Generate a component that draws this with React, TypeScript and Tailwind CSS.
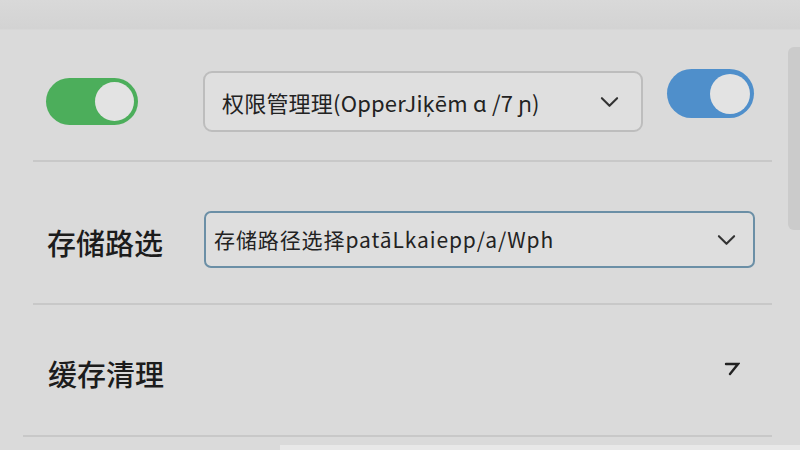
import React from "react";

const font = { fontFamily: '"Noto Sans CJK SC", "Noto Sans", sans-serif' };

function Chevron({ className }: { className: string }) {
  return (
    <svg className={className} viewBox="0 0 20 12" fill="none" stroke="#333" strokeWidth="2.2" strokeLinecap="round" strokeLinejoin="round">
      <path d="M2 2 L10 10 L18 2" />
    </svg>
  );
}

export default function App() {
  return (
    <div className="relative w-[800px] h-[450px] overflow-hidden bg-[#dadada] text-[#1c1c1c]" style={font}>
      <div className="h-[30px] bg-gradient-to-b from-[#d9d9d9] to-[#d3d3d3] border-b border-[#d7d7d7]" />

      {/* Row 1 */}
      <div className="h-[130px] flex items-center pt-[13px]">
        <div className="ml-[46px] w-[92px] h-[47px] rounded-full bg-[#4cae5b] flex items-center justify-end pr-[4px]">
          <div className="w-[39px] h-[39px] rounded-full bg-[#e3e3e3]" />
        </div>
        <div className="ml-[65px] w-[440px] h-[61px] rounded-[9px] border-2 border-[#bdbdbd] bg-[#dfdfdf] flex items-center pl-[17px] pr-[22px]">
          <span className="text-[22px] leading-none tracking-[0.2px] text-[#222]">权限管理理(OpperJiķēm ɑ /7 ɲ)</span>
          <Chevron className="ml-auto w-[19px] h-[12px]" />
        </div>
        <div className="ml-[24px] mb-[16px] w-[87px] h-[49px] rounded-full bg-[#4f8fcb] flex items-center justify-end pr-[4px]">
          <div className="w-[40px] h-[40px] rounded-full bg-[#e3e3e3]" />
        </div>
      </div>
      <div className="ml-[33px] w-[739px] h-[2px] bg-[#c8c8c8]" />

      {/* Row 2 */}
      <div className="h-[141px] flex items-center pt-[14px]">
        <span className="ml-[47px] w-[157px] text-[29px] font-medium leading-none mt-[6px]">存储路选</span>
        <div className="w-[551px] h-[57px] rounded-[7px] border-2 border-[#6b8fa6] bg-[#dedede] flex items-center pl-[8px] pr-[17px]">
          <span className="text-[21px] leading-none tracking-[0.9px] text-[#222]">存储路径选择patāLkaiepp/a/Wph</span>
          <Chevron className="ml-auto w-[19px] h-[12px]" />
        </div>
      </div>
      <div className="ml-[33px] w-[739px] h-[2px] bg-[#c8c8c8]" />

      {/* Row 3 */}
      <div className="h-[130px] flex items-center pt-[6px]">
        <span className="ml-[48px] text-[29px] font-medium leading-none">缓存清理</span>
        <svg className="ml-auto mr-[60px] w-[16px] h-[14px] mb-[8px]" viewBox="0 0 16 14" fill="none" stroke="#222" strokeWidth="2.4" strokeLinecap="round">
          <path d="M2 2 L14 2 L6 12" />
        </svg>
      </div>
      <div className="ml-[23px] w-[749px] h-[2px] bg-[#c8c8c8]" />
      <div className="flex h-[20px]">
        <div className="w-[280px]" />
        <div className="flex-1 mt-[8px] bg-[#e8e8e8]" />
      </div>

      {/* scrollbar */}
      <div className="absolute right-0 top-[47px] w-[12px] h-[183px] rounded-l-[6px] bg-[#cbcbcb]" />
    </div>
  );
}
